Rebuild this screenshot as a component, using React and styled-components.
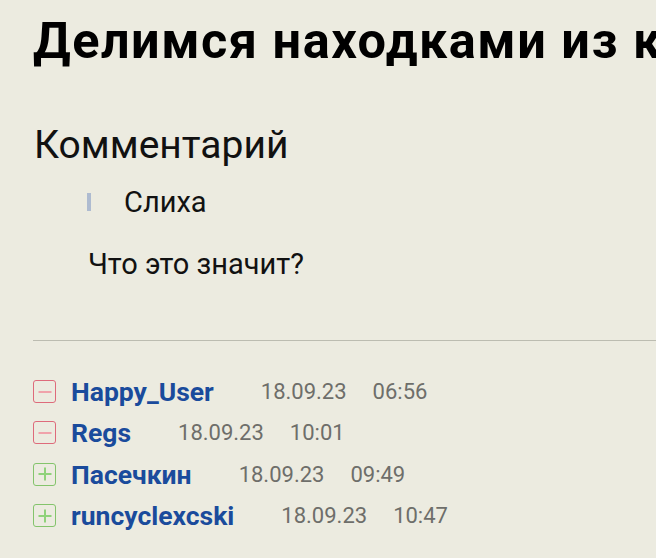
import React from 'react';
import styled, { createGlobalStyle } from 'styled-components';

const GlobalStyle = createGlobalStyle`
  html, body {
    margin: 0;
    padding: 0;
    background: #ecebe0;
    overflow: hidden;
  }
  body {
    font-family: Roboto, "Noto Sans", sans-serif;
    color: #111;
  }
`;

const Page = styled.div`
  padding: 11px 0 0 33px;
`;

const Title = styled.h1`
  margin: 0;
  font-size: 50.5px;
  line-height: 60px;
  font-weight: 700;
  letter-spacing: 1.5px;
  white-space: nowrap;
  color: #000;
`;

const Heading = styled.h2`
  margin: 50px 0 0 1px;
  font-size: 39px;
  line-height: 48px;
  font-weight: 400;
`;

const Quote = styled.blockquote`
  margin: 15px 0 0 54px;
  display: flex;
  align-items: center;
  gap: 33px;
  font-size: 29px;
  line-height: 36px;
`;

const QuoteBar = styled.span`
  width: 4px;
  height: 18px;
  background: #aebbd0;
`;

const Text = styled.p`
  margin: 26px 0 0 55px;
  font-size: 29px;
  line-height: 36px;
`;

const Divider = styled.hr`
  margin: 58px 0 0;
  border: 0;
  border-top: 1px solid #bcbcb1;
`;

const List = styled.ul`
  list-style: none;
  margin: 30px 0 0;
  padding: 0;
`;

const Row = styled.li`
  display: flex;
  align-items: center;
  height: 41.3px;
`;

const Toggle = styled.span`
  position: relative;
  box-sizing: border-box;
  width: 23px;
  height: 23px;
  border: 1px solid ${(p) => (p.$open ? '#84c46c' : '#de6b7b')};
  border-radius: 3px;
  margin-right: 15px;
  flex-shrink: 0;
  &::before,
  &::after {
    content: '';
    position: absolute;
    left: 50%;
    top: 50%;
    background: ${(p) => (p.$open ? '#8fd27a' : '#f0a3ab')};
  }
  &::before {
    width: 13px;
    height: 2px;
    transform: translate(-50%, -50%);
  }
  &::after {
    display: ${(p) => (p.$open ? 'block' : 'none')};
    width: 2px;
    height: 13px;
    transform: translate(-50%, -50%);
  }
`;

const Author = styled.a`
  font-size: 26.5px;
  font-weight: 700;
  color: #1a4b9c;
  text-decoration: none;
`;

const Meta = styled.span`
  font-size: 22px;
  color: #6e6e6a;
  margin-left: ${(p) => p.$gap}px;
`;

const comments = [
  { user: 'Happy_User', date: '18.09.23', time: '06:56', open: false },
  { user: 'Regs', date: '18.09.23', time: '10:01', open: false },
  { user: 'Пасечкин', date: '18.09.23', time: '09:49', open: true },
  { user: 'runcyclexcski', date: '18.09.23', time: '10:47', open: true },
];

export default function App() {
  return (
    <>
      <GlobalStyle />
      <Page>
        <Title>Делимся находками из книг</Title>
        <Heading>Комментарий</Heading>
        <Quote>
          <QuoteBar />
          <span>Слиха</span>
        </Quote>
        <Text>Что это значит?</Text>
        <Divider />
        <List>
          {comments.map((c) => (
            <Row key={c.user}>
              <Toggle $open={c.open} />
              <Author href="#">{c.user}</Author>
              <Meta $gap={47}>{c.date}</Meta>
              <Meta $gap={26}>{c.time}</Meta>
            </Row>
          ))}
        </List>
      </Page>
    </>
  );
}
